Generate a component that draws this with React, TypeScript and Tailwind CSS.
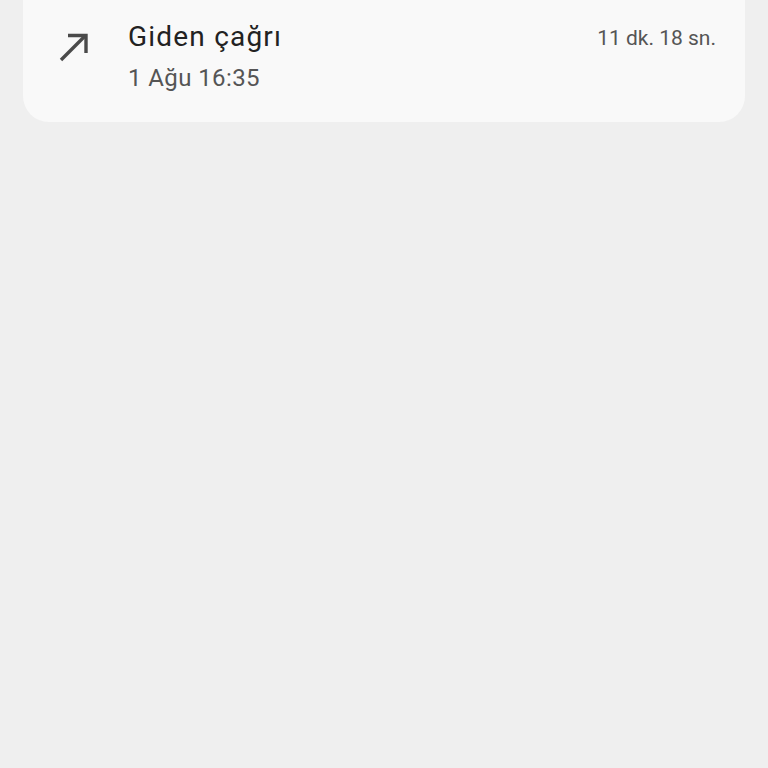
export default function App() {
  return (
    <div className="min-h-[768px] w-full bg-[#efefef] font-['Roboto','Noto_Sans',sans-serif]">
      <div className="mx-[23px] h-[122px] rounded-b-[26px] bg-[#f9f9f9] flex items-start pt-[19px] pl-[35px] pr-[29px]">
        <div className="w-[70px] pt-[13px]">
          <svg width="32" height="32" viewBox="0 0 32 32" fill="none" stroke="#4a4a4a" strokeWidth="3.4" strokeLinecap="butt">
            <path d="M3 28 L27 4" />
            <path d="M10 3.5 H28 V21" strokeLinejoin="miter" />
          </svg>
        </div>
        <div className="flex-1 flex flex-col">
          <div className="text-[28px] leading-[36px] text-[#222] tracking-[1.2px]">Giden çağrı</div>
          <div className="text-[24px] leading-[30px] text-[#555] mt-[8px] tracking-[0.4px]">1 Ağu 16:35</div>
        </div>
        <div className="text-[21px] leading-[36px] text-[#555] pt-[1px]">11 dk. 18 sn.</div>
      </div>
    </div>
  )
}
